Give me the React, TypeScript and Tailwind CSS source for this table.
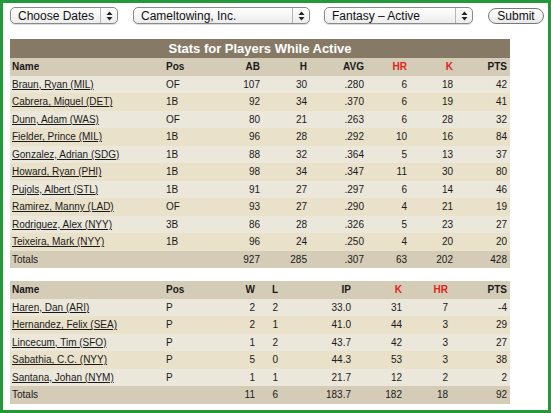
import React from "react";

type Col = { w: number; align: "l" | "r"; red?: boolean };

const batCols: Col[] = [
  { w: 154, align: "l" },
  { w: 60, align: "l" },
  { w: 39, align: "r" },
  { w: 47, align: "r" },
  { w: 57, align: "r" },
  { w: 43, align: "r", red: true },
  { w: 46, align: "r", red: true },
  { w: 54, align: "r" },
];

const pitCols: Col[] = [
  { w: 154, align: "l" },
  { w: 60, align: "l" },
  { w: 34, align: "r" },
  { w: 23, align: "r" },
  { w: 73, align: "r" },
  { w: 51, align: "r", red: true },
  { w: 46, align: "r", red: true },
  { w: 59, align: "r" },
];

const batters = [
  ["Braun, Ryan (MIL)", "OF", "107", "30", ".280", "6", "18", "42"],
  ["Cabrera, Miguel (DET)", "1B", "92", "34", ".370", "6", "19", "41"],
  ["Dunn, Adam (WAS)", "OF", "80", "21", ".263", "6", "28", "32"],
  ["Fielder, Prince (MIL)", "1B", "96", "28", ".292", "10", "16", "84"],
  ["Gonzalez, Adrian (SDG)", "1B", "88", "32", ".364", "5", "13", "37"],
  ["Howard, Ryan (PHI)", "1B", "98", "34", ".347", "11", "30", "80"],
  ["Pujols, Albert (STL)", "1B", "91", "27", ".297", "6", "14", "46"],
  ["Ramirez, Manny (LAD)", "OF", "93", "27", ".290", "4", "21", "19"],
  ["Rodriguez, Alex (NYY)", "3B", "86", "28", ".326", "5", "23", "27"],
  ["Teixeira, Mark (NYY)", "1B", "96", "24", ".250", "4", "20", "20"],
];

const pitchers = [
  ["Haren, Dan (ARI)", "P", "2", "2", "33.0", "31", "7", "-4"],
  ["Hernandez, Felix (SEA)", "P", "2", "1", "41.0", "44", "3", "29"],
  ["Lincecum, Tim (SFO)", "P", "1", "2", "43.7", "42", "3", "27"],
  ["Sabathia, C.C. (NYY)", "P", "5", "0", "44.3", "53", "3", "38"],
  ["Santana, Johan (NYM)", "P", "1", "1", "21.7", "12", "2", "2"],
];

function Row({
  cols,
  cells,
  kind,
  idx,
}: {
  cols: Col[];
  cells: string[];
  kind: "head" | "body" | "total";
  idx?: number;
}) {
  const bg =
    kind === "body"
      ? (idx ?? 0) % 2 === 0
        ? "bg-[#ebe7da]"
        : "bg-[#e9e1c9]"
      : "bg-[#d5ccb8]";
  return (
    <div className={`flex h-[17.5px] items-center ${bg}`}>
      {cols.map((c, i) => (
        <div
          key={i}
          style={{ width: c.w }}
          className={`shrink-0 ${c.align === "r" ? "text-right pr-[3px]" : "pl-[2px]"} ${
            kind === "head" ? "font-bold" : ""
          } ${kind === "head" && c.red ? "text-[#e0231c]" : "text-[#1a1a1a]"}`}
        >
          {kind === "body" && i === 0 ? (
            <span className="underline underline-offset-[1px]">{cells[i]}</span>
          ) : (
            cells[i]
          )}
        </div>
      ))}
    </div>
  );
}

function Arrows() {
  return (
    <svg width="7" height="10" viewBox="0 0 7 10" className="block">
      <path d="M3.5 0.5 L6.5 4 L0.5 4 Z" fill="#222" />
      <path d="M3.5 9.5 L6.5 6 L0.5 6 Z" fill="#222" />
    </svg>
  );
}

function Select({ label, w }: { label: string; w: number }) {
  return (
    <div
      style={{ width: w }}
      className="flex h-[17px] items-stretch rounded-[5px] border border-[#8a8a8a] bg-gradient-to-b from-[#ffffff] to-[#ececec] shadow-[0_1px_1px_rgba(0,0,0,0.15)]"
    >
      <div className="flex flex-1 items-center pl-[7px] text-[12px] text-[#111] leading-none">
        {label}
      </div>
      <div className="flex w-[17px] items-center justify-center border-l border-[#b5b5b5]">
        <Arrows />
      </div>
    </div>
  );
}

export default function App() {
  return (
    <div
      className="w-[551px] h-[413px] border-[3px] border-[#24993a] bg-white"
      style={{ fontFamily: '"Liberation Sans", Arial, sans-serif' }}
    >
      <div className="pl-[7px] pt-[4px]">
        <div className="flex items-center h-[17px]">
          <Select label="Choose Dates" w={108} />
          <div className="w-[15px]" />
          <Select label="Cameltowing, Inc." w={177} />
          <div className="w-[14px]" />
          <Select label="Fantasy – Active" w={149} />
          <div className="w-[15px]" />
          <div className="flex h-[16px] w-[56px] items-center justify-center rounded-full border border-[#777] bg-gradient-to-b from-[#ffffff] to-[#e8e8e8] text-[12px] text-[#111] leading-none">
            Submit
          </div>
        </div>

        <div className="mt-[15px] w-[500px] text-[10px]">
          <div className="flex h-[19px] items-center justify-center bg-[#867a67] text-[13px] font-bold text-white">
            Stats for Players While Active
          </div>
          <Row
            cols={batCols}
            kind="head"
            cells={["Name", "Pos", "AB", "H", "AVG", "HR", "K", "PTS"]}
          />
          {batters.map((b, i) => (
            <Row key={i} cols={batCols} kind="body" idx={i} cells={b} />
          ))}
          <Row
            cols={batCols}
            kind="total"
            cells={["Totals", "", "927", "285", ".307", "63", "202", "428"]}
          />

          <div className="h-[13px]" />

          <Row
            cols={pitCols}
            kind="head"
            cells={["Name", "Pos", "W", "L", "IP", "K", "HR", "PTS"]}
          />
          {pitchers.map((p, i) => (
            <Row key={i} cols={pitCols} kind="body" idx={i} cells={p} />
          ))}
          <Row
            cols={pitCols}
            kind="total"
            cells={["Totals", "", "11", "6", "183.7", "182", "18", "92"]}
          />
        </div>
      </div>
    </div>
  );
}
